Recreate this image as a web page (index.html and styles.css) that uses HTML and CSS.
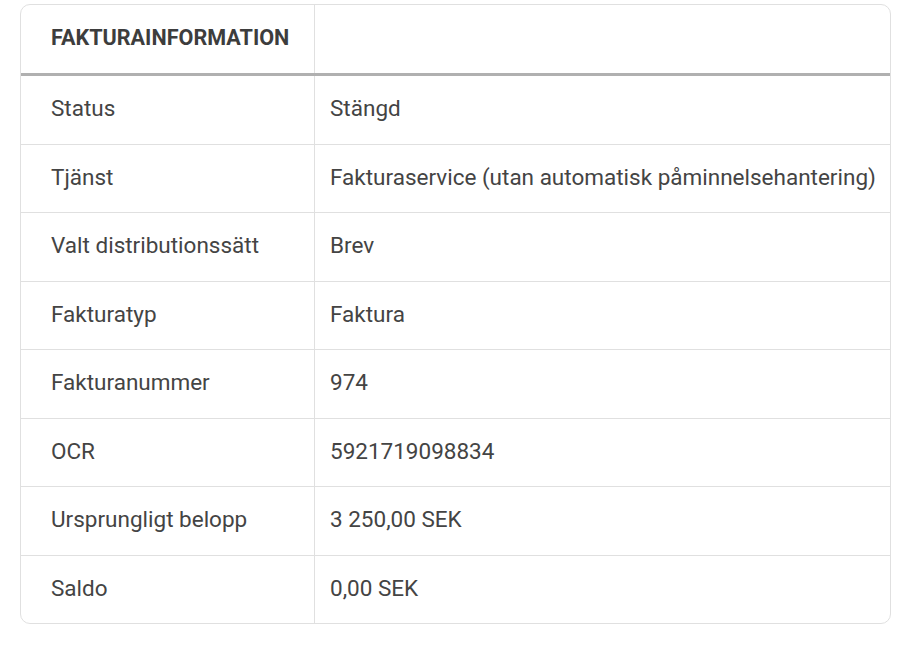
FILE: index.html
```html
<!DOCTYPE html>
<html lang="sv">
<head>
<meta charset="utf-8">
<link rel="stylesheet" href="styles.css">
</head>
<body>
<div class="card">
  <table class="info">
    <thead>
      <tr><th class="label">FAKTURAINFORMATION</th><th class="value"></th></tr>
    </thead>
    <tbody>
      <tr><td class="label">Status</td><td class="value">Stängd</td></tr>
      <tr><td class="label">Tjänst</td><td class="value">Fakturaservice (utan automatisk påminnelsehantering)</td></tr>
      <tr><td class="label">Valt distributionssätt</td><td class="value">Brev</td></tr>
      <tr><td class="label">Fakturatyp</td><td class="value">Faktura</td></tr>
      <tr><td class="label">Fakturanummer</td><td class="value">974</td></tr>
      <tr><td class="label">OCR</td><td class="value">5921719098834</td></tr>
      <tr><td class="label">Ursprungligt belopp</td><td class="value">3 250,00 SEK</td></tr>
      <tr><td class="label">Saldo</td><td class="value">0,00 SEK</td></tr>
    </tbody>
  </table>
</div>
</body>
</html>
```
FILE: styles.css
```css
html, body { margin: 0; padding: 0; background: #fff; }
body { padding: 4px 29px 0 20px; font-family: Roboto, "Noto Sans", sans-serif; color: #444; }
.card {
  border: 1px solid #e0e0e0;
  border-radius: 10px;
  overflow: hidden;
  width: 869px;
}
.info { width: 100%; border-collapse: collapse; }
.info th, .info td { text-align: left; vertical-align: middle; padding: 0 0 2px 0; line-height: 1.2; }
.info th {
  height: 66px;
  font-size: 21.6px;
  font-weight: 700;
  color: #3d3d3d;
  border-bottom: 3px solid #b0b0b0;
}
.info td {
  height: 65.5px;
  font-size: 22.5px;
  border-top: 1px solid #e0e0e0;
}
.info tbody tr:first-child td { border-top: none; }
.info .label { width: 263px; padding-left: 30px; border-right: 1px solid #e0e0e0; }
.info .value { padding-left: 15px; white-space: nowrap; }
```
